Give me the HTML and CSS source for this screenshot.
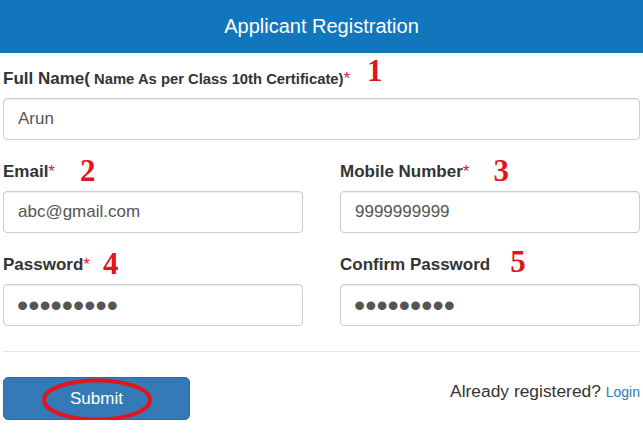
FILE: index.html
```html
<!DOCTYPE html>
<html lang="en">
<head>
  <meta charset="UTF-8" />
  <meta name="viewport" content="width=device-width, initial-scale=1.0"/>
  <title>Applicant Registration</title>
  <link rel="stylesheet" href="styles.css">
</head>
<body>

  <header class="page-head">Applicant Registration</header>

  <form class="reg-form">
    <div class="field">
      <label class="field-label" for="fullName">Full Name(<small class="label-note"> Name As per Class 10th Certificate)</small><span class="req">*</span><span class="mark mark-1">1</span></label>
      <input class="text-input" id="fullName" type="text" value="Arun">
    </div>

    <div class="field-row">
      <div class="field">
        <label class="field-label" for="email">Email<span class="req">*</span><span class="mark mark-2">2</span></label>
        <input class="text-input" id="email" type="email" value="abc@gmail.com">
      </div>
      <div class="field">
        <label class="field-label" for="mobile">Mobile Number<span class="req">*</span><span class="mark mark-3">3</span></label>
        <input class="text-input" id="mobile" type="tel" value="9999999999">
      </div>
    </div>

    <div class="field-row">
      <div class="field">
        <label class="field-label" for="password">Password<span class="req">*</span><span class="mark mark-4">4</span></label>
        <input class="text-input pass-input" id="password" type="password" value="123456789">
      </div>
      <div class="field">
        <label class="field-label" for="confirm">Confirm Password<span class="mark mark-5">5</span></label>
        <input class="text-input pass-input" id="confirm" type="password" value="123456789">
      </div>
    </div>

    <hr class="divider">

    <div class="form-foot">
      <button class="btn-submit" type="button">
        Submit
        <!-- red ring drawn round the button -->
        <svg class="ring" viewBox="0 0 187 43" width="187" height="43">
          <ellipse cx="94" cy="23" rx="53" ry="19.5" fill="none" stroke="#e3141c" stroke-width="4"/>
        </svg>
      </button>
      <p class="login-note">Already registered? <a href="#">Login</a></p>
    </div>
  </form>

</body>
</html>
```

FILE: styles.css
```css
body {
  margin: 0;
  font-family: "Liberation Sans", Arial, sans-serif;
  color: #333;
  background-color: #fff;
}

.page-head {
  height: 53px;
  line-height: 53px;
  background-color: #1276bc;
  color: #fff;
  font-size: 20px;
  text-align: center;
}

.reg-form {
  padding: 14px 3px 0 3px;
}

.field {
  margin-bottom: 20px;
}

.field-row {
  display: grid;
  grid-template-columns: 1fr 1fr;
  column-gap: 37px;
}

.field-label {
  display: block;
  font-size: 17px;
  font-weight: bold;
  line-height: 24px;
  margin-bottom: 7px;
  white-space: nowrap;
}

.label-note {
  font-size: 14.8px;
}

.req {
  color: #d9232d;
  font-weight: normal;
}

.mark {
  font-family: "Liberation Serif", "Times New Roman", serif;
  font-size: 31px;
  font-weight: bold;
  line-height: 0;
  color: #e3141c;
}

.mark-1 { margin-left: 17px; vertical-align: 3px; }
.mark-2 { margin-left: 25px; vertical-align: -4px; }
.mark-3 { margin-left: 24px; vertical-align: -4px; }
.mark-4 { margin-left: 13px; vertical-align: -4px; }
.mark-5 { margin-left: 20px; vertical-align: -2px; }

.text-input {
  display: block;
  width: 100%;
  height: 42px;
  box-sizing: border-box;
  padding: 0 14px;
  font-family: "Liberation Sans", Arial, sans-serif;
  font-size: 17px;
  color: #555;
  background-color: #fff;
  border: 1px solid #ccc;
  border-radius: 4px;
  box-shadow: inset 0 1px 1px rgba(0, 0, 0, 0.075);
}

.pass-input {
  font-size: 32px;
  padding-left: 13px;
}

.divider {
  margin: 5px 0 25px;
  border: 0;
  border-top: 1px solid #e5e5e5;
}

.form-foot {
  display: flex;
  justify-content: space-between;
  align-items: flex-start;
}

.btn-submit {
  position: relative;
  width: 187px;
  height: 43px;
  padding: 0;
  background-color: #337ab7;
  border: 1px solid #2e6da4;
  border-radius: 5px;
  color: #fff;
  font-family: "Liberation Sans", Arial, sans-serif;
  font-size: 17px;
}

.ring {
  position: absolute;
  top: -1px;
  left: -1px;
  overflow: visible;
}

.login-note {
  margin: 2px 0 0;
  font-size: 17.4px;
  line-height: 24px;
}

.login-note a {
  font-size: 14px;
  color: #337ab7;
  text-decoration: none;
}
```
